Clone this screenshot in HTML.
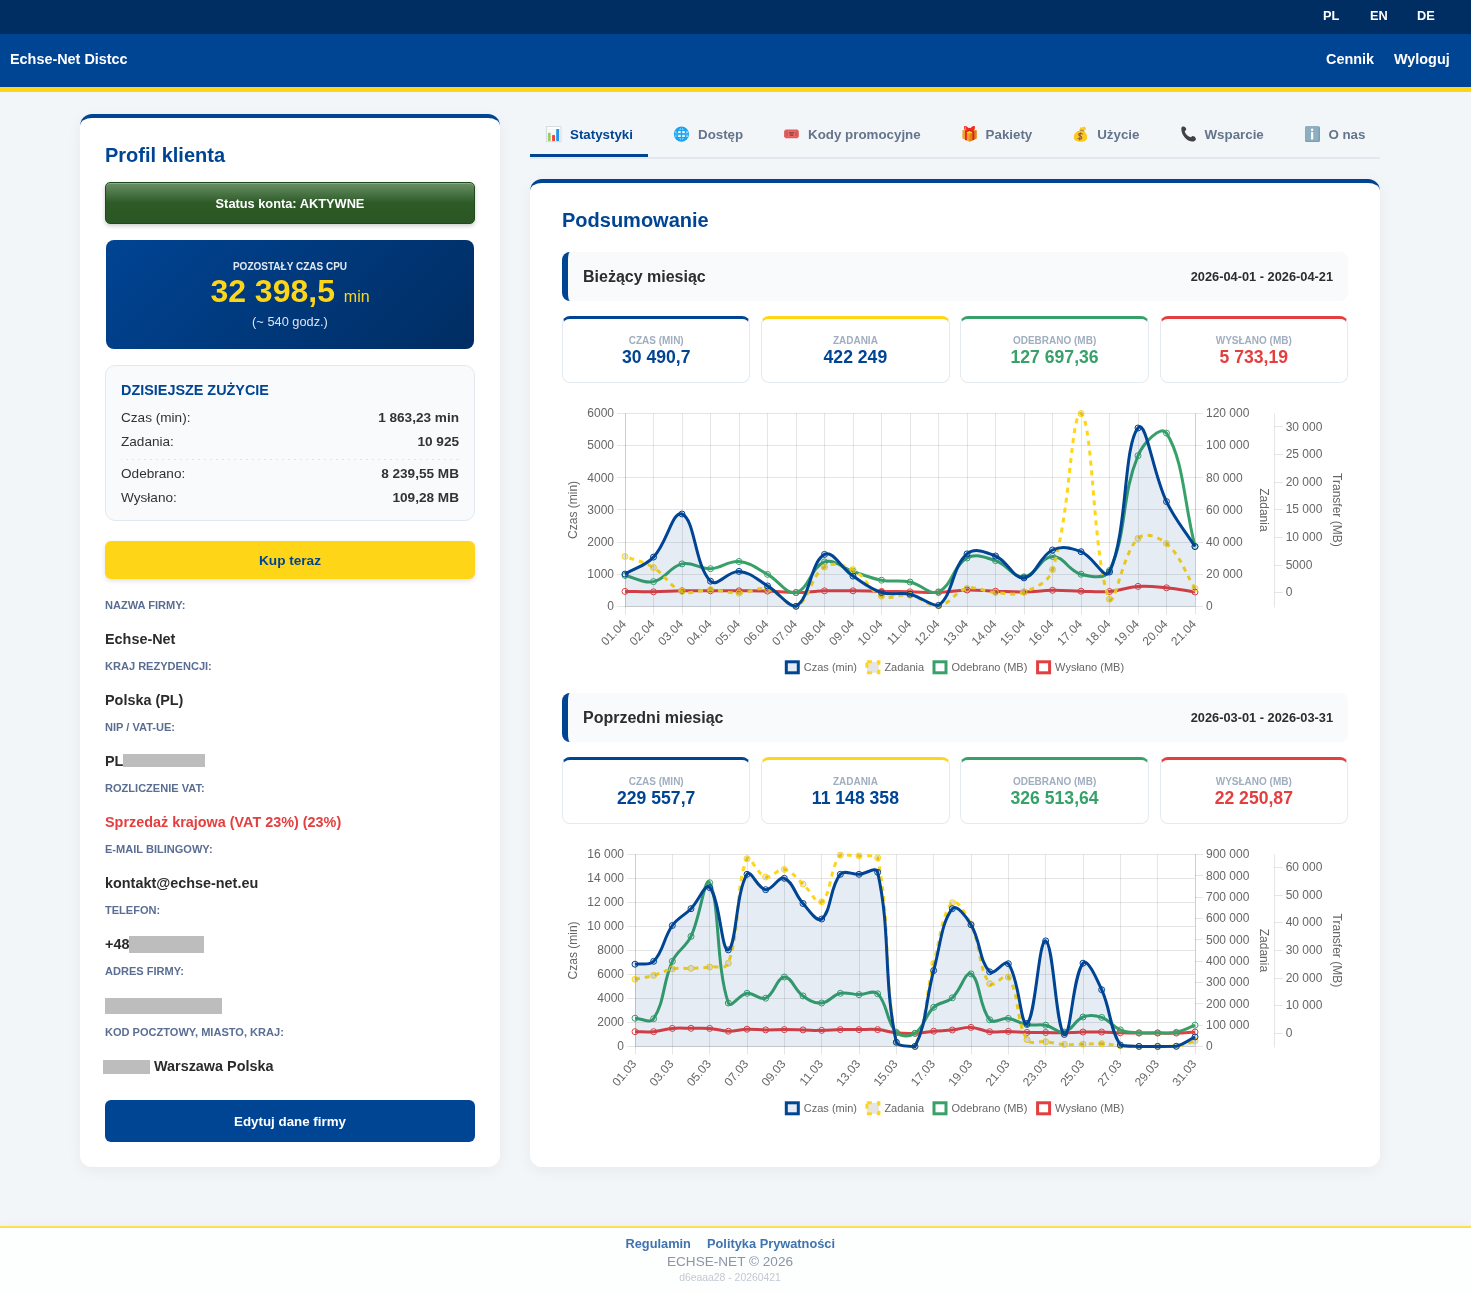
<!DOCTYPE html>
<html lang="pl"><head><meta charset="utf-8"><title>Echse-Net Distcc</title>
<style>
*{box-sizing:border-box;margin:0;padding:0}
html,body{width:1471px;height:1292px;overflow:hidden}
body{font-family:"Liberation Sans",sans-serif;background:#f3f6f9;color:#333;position:relative;font-size:16px}
.abs{position:absolute}
.abs,.chart{will-change:transform}
.topbar{left:0;top:0;width:1471px;height:34px;background:#002d62}
.topbar a{position:absolute;top:0;height:34px;line-height:32px;font-size:12.8px;font-weight:bold;color:#fff}
.nav{left:0;top:34px;width:1471px;height:58px;background:#004494;border-bottom:5px solid #FFD617}
.nav span{position:absolute;top:0;height:53px;line-height:50px;font-size:14.4px;font-weight:bold;color:#fff;white-space:nowrap}
.card{background:#fff;border-top:4px solid #004494;border-radius:12px;box-shadow:0 4px 15px rgba(0,0,0,0.05)}
#left{left:80px;top:114px;width:420px;height:1053px}
#right{left:530px;top:179px;width:850px;height:988px}
h2{position:absolute;font-weight:bold;color:#004494;white-space:nowrap}
.status{left:25px;top:64px;width:370px;height:42px;border:1px solid #1f4a1b;border-radius:5px;background:linear-gradient(to bottom,#6a9066 0%,#2d5a27 50%,#2b5625 100%);box-shadow:inset 0 1px 0 rgba(255,255,255,0.25),0 2px 4px rgba(0,0,0,0.2);color:#fff;font-weight:bold;font-size:12.8px;text-align:center;line-height:40px;padding-top:1px}
.cpu{left:26px;top:122px;width:368px;height:109px;border-radius:8px;background:linear-gradient(135deg,#004494 0%,#002d62 100%);text-align:center;color:#fff}
.cpu .l{position:absolute;left:0;width:100%;top:21px;font-size:10px;font-weight:bold;line-height:12px;color:#e2e8f0}
.cpu .v{position:absolute;left:0;width:100%;top:32px;font-size:32px;font-weight:bold;line-height:38px;color:#FFD617;white-space:nowrap}
.cpu .v span{font-size:16px;font-weight:normal}
.cpu .h{position:absolute;left:0;width:100%;top:74px;font-size:12.8px;line-height:16px;color:#dbe3f0}
.today{left:25px;top:247px;width:370px;height:156px;border:1px solid #e2e8f0;border-radius:10px;background:#f8fafc}
.today .t{position:absolute;left:15px;top:15px;font-size:14.4px;font-weight:bold;color:#004494;line-height:18px}
.today .r{position:absolute;left:15px;right:15px;height:18px;line-height:18px;font-size:13.6px;color:#333}
.today .r b{position:absolute;right:0;top:0}
.today .sep{position:absolute;left:15px;right:15px;top:93px;height:1px;background:repeating-linear-gradient(to right,#dde5ef 0,#dde5ef 2px,transparent 2px,transparent 6px);background-position:-1px 0}
.btn{height:38px;border-radius:6px;text-align:center;font-weight:bold;font-size:13.6px}
.buy{left:25px;top:423px;width:370px;background:#FFD617;color:#004494;line-height:40px;box-shadow:0 2px 5px rgba(0,0,0,0.12)}
.edit{left:25px;top:982px;width:370px;height:42px;background:#004494;color:#fff;line-height:44px;font-size:13.333px}
.fl{position:absolute;left:25px;font-size:11.05px;font-weight:bold;color:#5a6e94;line-height:14px;white-space:nowrap}
.fv{position:absolute;left:25px;font-size:14.4px;font-weight:bold;color:#2b2b2b;line-height:18px;white-space:nowrap}
.red{color:#e53e3e}
.gray{position:absolute;background:#bdbdbd}
.tabs{left:530px;top:110px;width:850px;height:49px;border-bottom:2px solid #e2e8f0}
.tab{position:absolute;top:1px;height:49px;line-height:48px;font-size:13.333px;font-weight:bold;color:#64748b;white-space:nowrap}
.tab.on{color:#004494}
.tab svg{position:absolute;top:16px}
.tabline{left:530px;top:154px;width:118px;height:3px;background:#004494}
.mh{left:32px;width:786px;height:49px;background:#f8fafc;border-left:6px solid #004494;border-radius:8px}
.mh b{position:absolute;left:15px;top:0;line-height:49px;font-size:16px;color:#2d2d2d}
.mh i{position:absolute;right:15px;top:0;line-height:49px;font-size:12.8px;font-style:normal;font-weight:bold;color:#2d2d2d}
.st{position:absolute;width:188.4px;height:67px;background:#fff;border:1px solid #e4eaf2;border-top:3px solid #004494;border-radius:8px;text-align:center}
.st .a{position:absolute;left:0;width:100%;top:16px;font-size:10px;font-weight:bold;line-height:12px;color:#a0aec0}
.st .b{position:absolute;left:0;width:100%;top:27px;font-size:17.6px;line-height:22px;font-weight:bold;color:#004494}
.chart{position:absolute;overflow:visible}
.footer{left:0;top:1226px;width:1471px;height:66px;background:#fdfefe;border-top:2px solid #ffdf52;text-align:center;box-shadow:0 -2px 8px rgba(0,0,0,0.03)}
.footer .a{position:absolute;top:8px;font-size:12.8px;font-weight:bold;color:#4073af;line-height:16px;white-space:nowrap}
.footer .b{position:absolute;left:0;width:1460px;top:26px;font-size:13.6px;color:#8a95a8;line-height:16px}
.footer .c{position:absolute;left:0;width:1460px;top:44px;font-size:10.4px;color:#c3c8d2;line-height:12px}
</style></head>
<body>
<div class="abs topbar"><a style="left:1323px">PL</a><a style="left:1370px">EN</a><a style="left:1417px">DE</a></div>
<div class="abs nav"><span style="left:10px">Echse-Net Distcc</span><span style="left:1326px">Cennik</span><span style="left:1394px">Wyloguj</span></div>

<div class="abs card" id="left">
 <h2 style="left:25px;top:25px;font-size:20px;line-height:24px">Profil klienta</h2>
 <div class="abs status">Status konta: AKTYWNE</div>
 <div class="abs cpu"><div class="l">POZOSTAŁY CZAS CPU</div><div class="v">32 398,5 <span>min</span></div><div class="h">(~ 540 godz.)</div></div>
 <div class="abs today">
  <div class="t">DZISIEJSZE ZUŻYCIE</div>
  <div class="r" style="top:43px">Czas (min):<b>1 863,23 min</b></div>
  <div class="r" style="top:67px">Zadania:<b>10 925</b></div>
  <div class="sep"></div>
  <div class="r" style="top:99px">Odebrano:<b>8 239,55 MB</b></div>
  <div class="r" style="top:123px">Wysłano:<b>109,28 MB</b></div>
 </div>
 <div class="abs btn buy">Kup teraz</div>
 <div class="fl" style="top:480px">NAZWA FIRMY:</div><div class="fv" style="top:512px">Echse-Net</div>
 <div class="fl" style="top:541px">KRAJ REZYDENCJI:</div><div class="fv" style="top:573px">Polska (PL)</div>
 <div class="fl" style="top:602px">NIP / VAT-UE:</div><div class="fv" style="top:634px">PL</div>
 <div class="gray" style="left:43px;top:636px;width:82px;height:13px"></div>
 <div class="fl" style="top:663px">ROZLICZENIE VAT:</div><div class="fv red" style="top:695px">Sprzedaż krajowa (VAT 23%) (23%)</div>
 <div class="fl" style="top:724px">E-MAIL BILINGOWY:</div><div class="fv" style="top:756px">kontakt@echse-net.eu</div>
 <div class="fl" style="top:785px">TELEFON:</div><div class="fv" style="top:817px">+48</div>
 <div class="gray" style="left:49px;top:818px;width:75px;height:17px"></div>
 <div class="fl" style="top:846px">ADRES FIRMY:</div>
 <div class="gray" style="left:25px;top:880px;width:117px;height:16px"></div>
 <div class="fl" style="top:907px">KOD POCZTOWY, MIASTO, KRAJ:</div><div class="fv" style="top:939px;left:74px">Warszawa Polska</div>
 <div class="gray" style="left:23px;top:942px;width:47px;height:14px"></div>
 <div class="abs btn edit">Edytuj dane firmy</div>
</div>

<div class="abs tabs">
 <div class="tab on" style="left:40.0px">Statystyki</div>
 <div class="tab" style="left:168.0px">Dostęp</div>
 <div class="tab" style="left:278.1px">Kody promocyjne</div>
 <div class="tab" style="left:455.6px">Pakiety</div>
 <div class="tab" style="left:567.2px">Użycie</div>
 <div class="tab" style="left:674.5px">Wsparcie</div>
 <div class="tab" style="left:798.4px">O nas</div>
</div>
<div class="abs tabline"></div>
<svg class="chart" style="left:540px;top:120px" width="800" height="28" viewBox="540 120 800 28">
<!-- bar chart -->
<g>
<rect x="546.4" y="126.6" width="14.5" height="15.1" fill="#fff" stroke="#cfd8dc" stroke-width="0.9"/>
<path d="M547,129.6H560.4M547,131.9H560.4M547,134.2H560.4M547,136.5H560.4M547,138.8H560.4" stroke="#e6ebef" stroke-width="0.7" fill="none"/>
<rect x="547.9" y="132.8" width="2.8" height="8.2" rx="0.6" fill="#9ccc65"/>
<rect x="552.1" y="134.9" width="2.9" height="6.1" rx="0.6" fill="#f44336"/>
<rect x="556.2" y="129" width="2.9" height="12" rx="0.6" fill="#1e96ec"/>
</g>
<!-- globe -->
<g transform="translate(681.45,134.05)">
<circle r="7.6" fill="#16a5f3"/>
<g fill="#e9f6fe">
<rect x="-3.4" y="-2.95" width="2.7" height="1.9" rx="0.3"/><rect x="0.7" y="-2.95" width="2.7" height="1.9" rx="0.3"/>
<rect x="-3.4" y="1.05" width="2.7" height="1.9" rx="0.3"/><rect x="0.7" y="1.05" width="2.7" height="1.9" rx="0.3"/>
<path d="M-2.4,-4.3 L-0.7,-6 L-0.7,-4.3Z" opacity="0.85"/><path d="M2.4,-4.3 L0.7,-6 L0.7,-4.3Z" opacity="0.85"/>
<path d="M-2.4,4.3 L-0.7,6 L-0.7,4.3Z" opacity="0.75"/><path d="M2.4,4.3 L0.7,6 L0.7,4.3Z" opacity="0.75"/>
</g>
<g fill="#9bd9fb"><rect x="-6.3" y="-2.8" width="1.5" height="1.7" rx="0.4"/><rect x="4.6" y="-2.9" width="1.9" height="1.8" rx="0.4"/><rect x="-6.3" y="1.1" width="1.5" height="1.7" rx="0.4"/><rect x="4.6" y="1.1" width="1.9" height="1.8" rx="0.4"/></g>
<rect x="-6.6" y="-0.75" width="13.6" height="1.5" fill="#4dbaf7" opacity="0.8"/>
<rect x="-0.45" y="-6.8" width="0.9" height="13.6" fill="#16a5f3"/>
</g>
<!-- ticket -->
<g>
<path d="M785.6,129.5 H797.3 L798.8,131 V136.7 L797.3,138.3 H785.6 L784.1,136.7 V131 Z" fill="#e1585a"/>
<rect x="785.3" y="130.6" width="12.3" height="6.6" fill="#ec6762"/>
<rect x="785.7" y="131.5" width="2.3" height="4.8" fill="#c85e58"/><rect x="795" y="131.5" width="2.3" height="4.8" fill="#c85e58"/>
<path d="M789.1,132.1 H793.9 V133.2 L793,134 V134.6 L793.5,135 V135.9 H789.6 V135 L790.1,134.6 V134 L789.1,133.2Z" fill="#9a4a46"/>
<rect x="790.1" y="133.3" width="2.9" height="1.2" fill="#b85650"/>
</g>
<!-- gift -->
<g>
<path d="M962.4,130.3 L969.5,128.9 L976.6,130.3 V138.6 L969.5,141.7 L962.4,138.6Z" fill="#eea22c"/>
<path d="M969.5,132.6 L976.6,130.3 V138.6 L969.5,141.7Z" fill="#df8417"/>
<path d="M966.9,131.4 L969.5,130.9 L972.1,131.4 L972,132.9 L969.5,133.4 L967,132.9Z" fill="#fdd916"/>
<rect x="965" y="130.6" width="1.9" height="9.6" fill="#ef2222"/>
<path d="M972.4,131 H974.3 V139.6 L972.4,140.4Z" fill="#dc1e26"/>
<path d="M969.6,130 C968,126.600 965.500,125.400 964.200,126.300 C963.500,128.300 964.500,130.800 966.500,131.300 C968,131.400 969.200,130.900 969.600,130Z" fill="#f72a1e"/>
<path d="M969.400,130 C971,126.600 973.500,125.400 974.800,126.300 C975.500,128.300 974.500,130.800 972.500,131.300 C971,131.400 969.800,130.900 969.400,130Z" fill="#f72a1e"/>
<ellipse cx="969.5" cy="129.4" rx="1.9" ry="1.7" fill="#ee2a22"/>
<path d="M966,131.100 C967.500,131.500 969,131.200 969.500,130.300 C970,131.200 971.500,131.500 973,131.100" stroke="#c2161c" stroke-width="0.9" fill="none"/>
<path d="M965.300,127.200 L965.900,129.800" stroke="#ffb3b3" stroke-width="0.7" fill="none" stroke-linecap="round"/>
</g>
<!-- money bag -->
<g>
<path d="M1080,130.600 C1076.500,131 1073.800,133.900 1073.800,137.300 C1073.800,140.200 1076,141.700 1080.400,141.700 C1084.900,141.700 1087.100,140.200 1087.100,137.400 C1087.100,134.300 1085.400,131.700 1083.300,130.700Z" fill="#fdc91f"/>
<path d="M1080.200,130.400 L1080,127.300 L1081.600,127.700 L1082.500,126.700 L1083.600,127.300 L1084.800,126.200 L1085.400,127.700 L1086.300,129.300 L1083.700,130.800Z" fill="#fccb22"/>
<path d="M1080,130.100 L1083.800,130.900" stroke="#a9782f" stroke-width="1" fill="none" stroke-linecap="round"/>
<path d="M1082.200,134.100 C1081.600,133.100 1079.600,132.900 1078.900,133.900 C1078.200,135 1079.300,135.700 1080.300,136.100 C1081.400,136.500 1082.200,137.300 1081.500,138.400 C1080.800,139.400 1078.800,139.300 1078,138.200 M1080.400,132.700 L1079.600,139.900" stroke="#8a5a3c" stroke-width="1.05" fill="none" stroke-linecap="round"/>
</g>
<!-- phone -->
<g>
<path d="M1181.300,128.400 C1181.300,126.800 1182.800,126.300 1183.900,126.500 C1185.300,126.800 1186.400,128.300 1186.200,129.600 C1186.100,130.400 1185.100,130.900 1184.700,131.500 C1185.500,134.300 1188.200,136.800 1190.900,137.300 C1191.400,136.800 1191.900,135.900 1192.700,135.900 C1194.100,135.900 1195.700,137.200 1195.900,138.600 C1196.100,139.900 1195.100,141.200 1193.600,141.500 C1187.500,142.300 1181.200,135.500 1181.300,128.400Z" fill="#424242"/>
</g>
<!-- info -->
<g>
<rect x="1305" y="126.200" width="15" height="15.800" rx="1.500" fill="#7a9fb3"/>
<rect x="1305.300" y="126.300" width="13.200" height="14.400" rx="1.200" fill="#8dafc2"/>
<circle cx="1312.100" cy="129.700" r="1.250" fill="#fff"/>
<rect x="1311" y="132" width="2.200" height="7.600" rx="0.300" fill="#fbfcfd"/>
</g>
</svg>


<div class="abs card" id="right">
 <h2 style="left:32px;top:24px;font-size:20px;line-height:26px">Podsumowanie</h2>
 <div class="abs mh" style="top:69px"><b>Bieżący miesiąc</b><i>2026-04-01 - 2026-04-21</i></div>
 <div class="st" style="left:32px;top:133px"><div class="a">CZAS (MIN)</div><div class="b">30 490,7</div></div>
 <div class="st" style="left:231.2px;top:133px;border-top-color:#FFD617"><div class="a">ZADANIA</div><div class="b">422 249</div></div>
 <div class="st" style="left:430.4px;top:133px;border-top-color:#38a169"><div class="a">ODEBRANO (MB)</div><div class="b" style="color:#38a169">127 697,36</div></div>
 <div class="st" style="left:629.6px;top:133px;border-top-color:#e53e3e"><div class="a">WYSŁANO (MB)</div><div class="b" style="color:#e53e3e">5 733,19</div></div>
 <div class="abs mh" style="top:510px"><b>Poprzedni miesiąc</b><i>2026-03-01 - 2026-03-31</i></div>
 <div class="st" style="left:32px;top:574px"><div class="a">CZAS (MIN)</div><div class="b">229 557,7</div></div>
 <div class="st" style="left:231.2px;top:574px;border-top-color:#FFD617"><div class="a">ZADANIA</div><div class="b">11 148 358</div></div>
 <div class="st" style="left:430.4px;top:574px;border-top-color:#38a169"><div class="a">ODEBRANO (MB)</div><div class="b" style="color:#38a169">326 513,64</div></div>
 <div class="st" style="left:629.6px;top:574px;border-top-color:#e53e3e"><div class="a">WYSŁANO (MB)</div><div class="b" style="color:#e53e3e">22 250,87</div></div>
</div>
<svg class="chart" style="left:562px;top:400px" width="786" height="290" viewBox="562 400 786 290"><line x1="625.5" y1="413.4" x2="625.5" y2="614.4" stroke="rgba(0,0,0,0.1)" stroke-width="1"/>
<line x1="653.5" y1="413.4" x2="653.5" y2="614.4" stroke="rgba(0,0,0,0.1)" stroke-width="1"/>
<line x1="682.5" y1="413.4" x2="682.5" y2="614.4" stroke="rgba(0,0,0,0.1)" stroke-width="1"/>
<line x1="710.5" y1="413.4" x2="710.5" y2="614.4" stroke="rgba(0,0,0,0.1)" stroke-width="1"/>
<line x1="739.5" y1="413.4" x2="739.5" y2="614.4" stroke="rgba(0,0,0,0.1)" stroke-width="1"/>
<line x1="767.5" y1="413.4" x2="767.5" y2="614.4" stroke="rgba(0,0,0,0.1)" stroke-width="1"/>
<line x1="796.5" y1="413.4" x2="796.5" y2="614.4" stroke="rgba(0,0,0,0.1)" stroke-width="1"/>
<line x1="824.5" y1="413.4" x2="824.5" y2="614.4" stroke="rgba(0,0,0,0.1)" stroke-width="1"/>
<line x1="853.5" y1="413.4" x2="853.5" y2="614.4" stroke="rgba(0,0,0,0.1)" stroke-width="1"/>
<line x1="881.5" y1="413.4" x2="881.5" y2="614.4" stroke="rgba(0,0,0,0.1)" stroke-width="1"/>
<line x1="910.5" y1="413.4" x2="910.5" y2="614.4" stroke="rgba(0,0,0,0.1)" stroke-width="1"/>
<line x1="938.5" y1="413.4" x2="938.5" y2="614.4" stroke="rgba(0,0,0,0.1)" stroke-width="1"/>
<line x1="967.5" y1="413.4" x2="967.5" y2="614.4" stroke="rgba(0,0,0,0.1)" stroke-width="1"/>
<line x1="995.5" y1="413.4" x2="995.5" y2="614.4" stroke="rgba(0,0,0,0.1)" stroke-width="1"/>
<line x1="1024.5" y1="413.4" x2="1024.5" y2="614.4" stroke="rgba(0,0,0,0.1)" stroke-width="1"/>
<line x1="1052.5" y1="413.4" x2="1052.5" y2="614.4" stroke="rgba(0,0,0,0.1)" stroke-width="1"/>
<line x1="1081.5" y1="413.4" x2="1081.5" y2="614.4" stroke="rgba(0,0,0,0.1)" stroke-width="1"/>
<line x1="1109.5" y1="413.4" x2="1109.5" y2="614.4" stroke="rgba(0,0,0,0.1)" stroke-width="1"/>
<line x1="1138.5" y1="413.4" x2="1138.5" y2="614.4" stroke="rgba(0,0,0,0.1)" stroke-width="1"/>
<line x1="1166.5" y1="413.4" x2="1166.5" y2="614.4" stroke="rgba(0,0,0,0.1)" stroke-width="1"/>
<line x1="1195.5" y1="413.4" x2="1195.5" y2="614.4" stroke="rgba(0,0,0,0.1)" stroke-width="1"/>
<line x1="617.0" y1="606.5" x2="1195.0" y2="606.5" stroke="rgba(0,0,0,0.1)" stroke-width="1"/>
<line x1="617.0" y1="574.5" x2="1195.0" y2="574.5" stroke="rgba(0,0,0,0.1)" stroke-width="1"/>
<line x1="617.0" y1="542.5" x2="1195.0" y2="542.5" stroke="rgba(0,0,0,0.1)" stroke-width="1"/>
<line x1="617.0" y1="509.5" x2="1195.0" y2="509.5" stroke="rgba(0,0,0,0.1)" stroke-width="1"/>
<line x1="617.0" y1="477.5" x2="1195.0" y2="477.5" stroke="rgba(0,0,0,0.1)" stroke-width="1"/>
<line x1="617.0" y1="445.5" x2="1195.0" y2="445.5" stroke="rgba(0,0,0,0.1)" stroke-width="1"/>
<line x1="617.0" y1="413.5" x2="1195.0" y2="413.5" stroke="rgba(0,0,0,0.1)" stroke-width="1"/>
<line x1="1195.0" y1="606.5" x2="1203.0" y2="606.5" stroke="rgba(0,0,0,0.1)" stroke-width="1"/>
<line x1="1195.0" y1="574.5" x2="1203.0" y2="574.5" stroke="rgba(0,0,0,0.1)" stroke-width="1"/>
<line x1="1195.0" y1="542.5" x2="1203.0" y2="542.5" stroke="rgba(0,0,0,0.1)" stroke-width="1"/>
<line x1="1195.0" y1="509.5" x2="1203.0" y2="509.5" stroke="rgba(0,0,0,0.1)" stroke-width="1"/>
<line x1="1195.0" y1="477.5" x2="1203.0" y2="477.5" stroke="rgba(0,0,0,0.1)" stroke-width="1"/>
<line x1="1195.0" y1="445.5" x2="1203.0" y2="445.5" stroke="rgba(0,0,0,0.1)" stroke-width="1"/>
<line x1="1195.0" y1="413.5" x2="1203.0" y2="413.5" stroke="rgba(0,0,0,0.1)" stroke-width="1"/>
<line x1="625.5" y1="413.4" x2="625.5" y2="606.4" stroke="rgba(0,0,0,0.1)" stroke-width="1"/>
<line x1="1195.5" y1="413.4" x2="1195.5" y2="606.4" stroke="rgba(0,0,0,0.1)" stroke-width="1"/>
<line x1="625.0" y1="606.5" x2="1195.0" y2="606.5" stroke="rgba(0,0,0,0.1)" stroke-width="1"/>
<line x1="1274.5" y1="413.4" x2="1274.5" y2="607.4" stroke="rgba(0,0,0,0.1)" stroke-width="1"/>
<line x1="1274.7" y1="592.5" x2="1282.7" y2="592.5" stroke="rgba(0,0,0,0.1)" stroke-width="1"/>
<line x1="1274.7" y1="565.5" x2="1282.7" y2="565.5" stroke="rgba(0,0,0,0.1)" stroke-width="1"/>
<line x1="1274.7" y1="537.5" x2="1282.7" y2="537.5" stroke="rgba(0,0,0,0.1)" stroke-width="1"/>
<line x1="1274.7" y1="509.5" x2="1282.7" y2="509.5" stroke="rgba(0,0,0,0.1)" stroke-width="1"/>
<line x1="1274.7" y1="482.5" x2="1282.7" y2="482.5" stroke="rgba(0,0,0,0.1)" stroke-width="1"/>
<line x1="1274.7" y1="454.5" x2="1282.7" y2="454.5" stroke="rgba(0,0,0,0.1)" stroke-width="1"/>
<line x1="1274.7" y1="426.5" x2="1282.7" y2="426.5" stroke="rgba(0,0,0,0.1)" stroke-width="1"/>
<path d="M625.00,591.40 C636.40,591.56 642.10,591.92 653.50,591.80 C664.90,591.68 670.60,591.00 682.00,590.80 C693.40,590.60 699.10,590.80 710.50,590.80 C721.90,590.80 727.60,590.74 739.00,590.80 C750.40,590.86 756.11,590.74 767.50,591.10 C778.91,591.46 784.60,592.66 796.00,592.60 C807.40,592.54 813.09,591.16 824.50,590.80 C835.89,590.44 841.60,590.68 853.00,590.80 C864.40,590.92 870.10,591.20 881.50,591.40 C892.90,591.60 898.60,591.58 910.00,591.80 C921.40,592.02 927.12,592.86 938.50,592.50 C949.92,592.14 955.58,590.26 967.00,590.00 C978.38,589.74 984.10,590.80 995.50,591.20 C1006.90,591.60 1012.61,592.18 1024.00,592.00 C1035.41,591.82 1041.09,590.46 1052.50,590.30 C1063.89,590.14 1069.60,590.96 1081.00,591.20 C1092.40,591.44 1098.19,592.45 1109.50,591.50 C1120.99,590.53 1126.52,587.15 1138.00,586.40 C1149.32,585.67 1155.15,586.69 1166.50,587.80 C1177.95,588.93 1183.60,590.32 1195.00,592.00" fill="none" stroke="#e53e3e" stroke-width="3" stroke-linejoin="miter"/>
<circle cx="625.00" cy="591.40" r="3" fill="none" stroke="#e53e3e" stroke-width="1"/><circle cx="653.50" cy="591.80" r="3" fill="none" stroke="#e53e3e" stroke-width="1"/><circle cx="682.00" cy="590.80" r="3" fill="none" stroke="#e53e3e" stroke-width="1"/><circle cx="710.50" cy="590.80" r="3" fill="none" stroke="#e53e3e" stroke-width="1"/><circle cx="739.00" cy="590.80" r="3" fill="none" stroke="#e53e3e" stroke-width="1"/><circle cx="767.50" cy="591.10" r="3" fill="none" stroke="#e53e3e" stroke-width="1"/><circle cx="796.00" cy="592.60" r="3" fill="none" stroke="#e53e3e" stroke-width="1"/><circle cx="824.50" cy="590.80" r="3" fill="none" stroke="#e53e3e" stroke-width="1"/><circle cx="853.00" cy="590.80" r="3" fill="none" stroke="#e53e3e" stroke-width="1"/><circle cx="881.50" cy="591.40" r="3" fill="none" stroke="#e53e3e" stroke-width="1"/><circle cx="910.00" cy="591.80" r="3" fill="none" stroke="#e53e3e" stroke-width="1"/><circle cx="938.50" cy="592.50" r="3" fill="none" stroke="#e53e3e" stroke-width="1"/><circle cx="967.00" cy="590.00" r="3" fill="none" stroke="#e53e3e" stroke-width="1"/><circle cx="995.50" cy="591.20" r="3" fill="none" stroke="#e53e3e" stroke-width="1"/><circle cx="1024.00" cy="592.00" r="3" fill="none" stroke="#e53e3e" stroke-width="1"/><circle cx="1052.50" cy="590.30" r="3" fill="none" stroke="#e53e3e" stroke-width="1"/><circle cx="1081.00" cy="591.20" r="3" fill="none" stroke="#e53e3e" stroke-width="1"/><circle cx="1109.50" cy="591.50" r="3" fill="none" stroke="#e53e3e" stroke-width="1"/><circle cx="1138.00" cy="586.40" r="3" fill="none" stroke="#e53e3e" stroke-width="1"/><circle cx="1166.50" cy="587.80" r="3" fill="none" stroke="#e53e3e" stroke-width="1"/><circle cx="1195.00" cy="592.00" r="3" fill="none" stroke="#e53e3e" stroke-width="1"/>
<path d="M625.00,575.50 C636.40,577.94 642.90,583.76 653.50,581.60 C665.70,579.12 669.75,566.67 682.00,563.90 C692.55,561.51 699.20,569.18 710.50,568.70 C722.00,568.22 727.95,560.40 739.00,561.50 C750.75,562.68 756.53,568.44 767.50,574.40 C779.33,580.84 785.81,594.73 796.00,592.50 C808.61,589.73 811.23,566.81 824.50,561.90 C834.03,558.37 841.56,567.73 853.00,571.40 C864.36,575.05 869.85,578.03 881.50,580.20 C892.65,582.27 898.91,579.74 910.00,582.00 C921.71,584.38 929.26,595.69 938.50,591.80 C952.06,586.09 953.16,565.58 967.00,558.00 C975.96,553.10 984.87,557.09 995.50,560.60 C1007.67,564.61 1012.98,577.61 1024.00,576.80 C1035.78,575.93 1040.86,556.93 1052.50,556.40 C1063.66,555.89 1068.71,571.16 1081.00,574.20 C1091.51,576.80 1105.04,579.77 1109.50,570.50 C1127.84,532.37 1120.56,497.73 1138.00,455.70 C1143.36,442.77 1161.09,424.48 1166.50,433.10 C1183.89,460.80 1183.60,501.14 1195.00,546.50" fill="none" stroke="#38a169" stroke-width="3" stroke-linejoin="miter"/>
<circle cx="625.00" cy="575.50" r="3" fill="none" stroke="#38a169" stroke-width="1"/><circle cx="653.50" cy="581.60" r="3" fill="none" stroke="#38a169" stroke-width="1"/><circle cx="682.00" cy="563.90" r="3" fill="none" stroke="#38a169" stroke-width="1"/><circle cx="710.50" cy="568.70" r="3" fill="none" stroke="#38a169" stroke-width="1"/><circle cx="739.00" cy="561.50" r="3" fill="none" stroke="#38a169" stroke-width="1"/><circle cx="767.50" cy="574.40" r="3" fill="none" stroke="#38a169" stroke-width="1"/><circle cx="796.00" cy="592.50" r="3" fill="none" stroke="#38a169" stroke-width="1"/><circle cx="824.50" cy="561.90" r="3" fill="none" stroke="#38a169" stroke-width="1"/><circle cx="853.00" cy="571.40" r="3" fill="none" stroke="#38a169" stroke-width="1"/><circle cx="881.50" cy="580.20" r="3" fill="none" stroke="#38a169" stroke-width="1"/><circle cx="910.00" cy="582.00" r="3" fill="none" stroke="#38a169" stroke-width="1"/><circle cx="938.50" cy="591.80" r="3" fill="none" stroke="#38a169" stroke-width="1"/><circle cx="967.00" cy="558.00" r="3" fill="none" stroke="#38a169" stroke-width="1"/><circle cx="995.50" cy="560.60" r="3" fill="none" stroke="#38a169" stroke-width="1"/><circle cx="1024.00" cy="576.80" r="3" fill="none" stroke="#38a169" stroke-width="1"/><circle cx="1052.50" cy="556.40" r="3" fill="none" stroke="#38a169" stroke-width="1"/><circle cx="1081.00" cy="574.20" r="3" fill="none" stroke="#38a169" stroke-width="1"/><circle cx="1109.50" cy="570.50" r="3" fill="none" stroke="#38a169" stroke-width="1"/><circle cx="1138.00" cy="455.70" r="3" fill="none" stroke="#38a169" stroke-width="1"/><circle cx="1166.50" cy="433.10" r="3" fill="none" stroke="#38a169" stroke-width="1"/><circle cx="1195.00" cy="546.50" r="3" fill="none" stroke="#38a169" stroke-width="1"/>
<path d="M625.00,556.40 C636.40,560.88 643.20,561.27 653.50,567.60 C666.00,575.27 669.11,586.40 682.00,591.40 C691.91,595.24 699.13,589.36 710.50,589.70 C721.93,590.04 727.62,593.22 739.00,593.10 C750.42,592.98 756.93,586.65 767.50,589.10 C779.73,591.93 786.73,606.40 796.00,606.30 C809.53,601.06 810.16,576.24 824.50,567.00 C832.96,561.56 843.34,564.67 853.00,569.60 C866.14,576.31 868.34,590.19 881.50,596.10 C891.14,600.43 898.97,593.32 910.00,595.20 C921.77,597.20 927.63,606.40 938.50,605.80 C950.43,604.38 954.76,591.23 967.00,588.40 C977.56,585.95 984.04,591.88 995.50,592.60 C1006.84,593.32 1013.96,596.05 1024.00,592.00 C1036.76,586.85 1048.26,582.88 1052.50,569.60 C1071.06,511.52 1070.56,413.40 1081.00,413.60 C1093.36,420.02 1092.70,562.39 1109.50,599.20 C1115.50,606.40 1122.08,554.03 1138.00,538.50 C1144.88,531.79 1158.45,536.56 1166.50,543.60 C1181.25,556.48 1183.60,570.42 1195.00,588.30" fill="none" stroke="#FFD617" stroke-width="3" stroke-linejoin="miter" stroke-dasharray="5 5" stroke-dashoffset="-4.5"/>
<circle cx="625.00" cy="556.40" r="3" fill="rgba(0,0,0,0.1)" stroke="#FFD617" stroke-width="1"/><circle cx="653.50" cy="567.60" r="3" fill="rgba(0,0,0,0.1)" stroke="#FFD617" stroke-width="1"/><circle cx="682.00" cy="591.40" r="3" fill="rgba(0,0,0,0.1)" stroke="#FFD617" stroke-width="1"/><circle cx="710.50" cy="589.70" r="3" fill="rgba(0,0,0,0.1)" stroke="#FFD617" stroke-width="1"/><circle cx="739.00" cy="593.10" r="3" fill="rgba(0,0,0,0.1)" stroke="#FFD617" stroke-width="1"/><circle cx="767.50" cy="589.10" r="3" fill="rgba(0,0,0,0.1)" stroke="#FFD617" stroke-width="1"/><circle cx="796.00" cy="606.30" r="3" fill="rgba(0,0,0,0.1)" stroke="#FFD617" stroke-width="1"/><circle cx="824.50" cy="567.00" r="3" fill="rgba(0,0,0,0.1)" stroke="#FFD617" stroke-width="1"/><circle cx="853.00" cy="569.60" r="3" fill="rgba(0,0,0,0.1)" stroke="#FFD617" stroke-width="1"/><circle cx="881.50" cy="596.10" r="3" fill="rgba(0,0,0,0.1)" stroke="#FFD617" stroke-width="1"/><circle cx="910.00" cy="595.20" r="3" fill="rgba(0,0,0,0.1)" stroke="#FFD617" stroke-width="1"/><circle cx="938.50" cy="605.80" r="3" fill="rgba(0,0,0,0.1)" stroke="#FFD617" stroke-width="1"/><circle cx="967.00" cy="588.40" r="3" fill="rgba(0,0,0,0.1)" stroke="#FFD617" stroke-width="1"/><circle cx="995.50" cy="592.60" r="3" fill="rgba(0,0,0,0.1)" stroke="#FFD617" stroke-width="1"/><circle cx="1024.00" cy="592.00" r="3" fill="rgba(0,0,0,0.1)" stroke="#FFD617" stroke-width="1"/><circle cx="1052.50" cy="569.60" r="3" fill="rgba(0,0,0,0.1)" stroke="#FFD617" stroke-width="1"/><circle cx="1081.00" cy="413.60" r="3" fill="rgba(0,0,0,0.1)" stroke="#FFD617" stroke-width="1"/><circle cx="1109.50" cy="599.20" r="3" fill="rgba(0,0,0,0.1)" stroke="#FFD617" stroke-width="1"/><circle cx="1138.00" cy="538.50" r="3" fill="rgba(0,0,0,0.1)" stroke="#FFD617" stroke-width="1"/><circle cx="1166.50" cy="543.60" r="3" fill="rgba(0,0,0,0.1)" stroke="#FFD617" stroke-width="1"/><circle cx="1195.00" cy="588.30" r="3" fill="rgba(0,0,0,0.1)" stroke="#FFD617" stroke-width="1"/>
<path d="M625.00,574.10 C636.40,567.30 644.58,566.50 653.50,557.10 C667.38,542.46 672.55,510.00 682.00,514.00 C695.35,519.64 694.36,564.95 710.50,581.20 C717.16,587.91 727.94,570.49 739.00,571.40 C750.74,572.37 756.62,579.24 767.50,585.90 C779.42,593.20 787.52,606.40 796.00,606.30 C810.32,598.39 810.29,561.93 824.50,554.40 C833.09,549.85 841.11,568.15 853.00,576.10 C863.91,583.39 869.30,588.62 881.50,592.50 C892.10,595.86 899.00,591.71 910.00,594.20 C921.80,596.87 930.70,606.40 938.50,605.40 C953.50,594.80 951.65,567.20 967.00,553.90 C974.45,547.44 985.40,551.75 995.50,556.00 C1008.20,561.35 1013.19,579.04 1024.00,577.90 C1035.99,576.64 1039.21,556.11 1052.50,550.00 C1062.01,545.63 1070.76,547.75 1081.00,551.70 C1093.56,556.55 1105.11,581.52 1109.50,572.00 C1127.91,532.04 1123.17,446.31 1138.00,428.00 C1145.97,418.15 1152.88,473.28 1166.50,501.60 C1175.68,520.68 1183.60,528.54 1195.00,546.50 L1195.00,606.40 L625.00,606.40 Z" fill="rgba(0,68,148,0.1)" stroke="none"/>
<path d="M625.00,574.10 C636.40,567.30 644.58,566.50 653.50,557.10 C667.38,542.46 672.55,510.00 682.00,514.00 C695.35,519.64 694.36,564.95 710.50,581.20 C717.16,587.91 727.94,570.49 739.00,571.40 C750.74,572.37 756.62,579.24 767.50,585.90 C779.42,593.20 787.52,606.40 796.00,606.30 C810.32,598.39 810.29,561.93 824.50,554.40 C833.09,549.85 841.11,568.15 853.00,576.10 C863.91,583.39 869.30,588.62 881.50,592.50 C892.10,595.86 899.00,591.71 910.00,594.20 C921.80,596.87 930.70,606.40 938.50,605.40 C953.50,594.80 951.65,567.20 967.00,553.90 C974.45,547.44 985.40,551.75 995.50,556.00 C1008.20,561.35 1013.19,579.04 1024.00,577.90 C1035.99,576.64 1039.21,556.11 1052.50,550.00 C1062.01,545.63 1070.76,547.75 1081.00,551.70 C1093.56,556.55 1105.11,581.52 1109.50,572.00 C1127.91,532.04 1123.17,446.31 1138.00,428.00 C1145.97,418.15 1152.88,473.28 1166.50,501.60 C1175.68,520.68 1183.60,528.54 1195.00,546.50" fill="none" stroke="#004494" stroke-width="3" stroke-linejoin="miter"/>
<circle cx="625.00" cy="574.10" r="3" fill="rgba(0,68,148,0.1)" stroke="#004494" stroke-width="1"/><circle cx="653.50" cy="557.10" r="3" fill="rgba(0,68,148,0.1)" stroke="#004494" stroke-width="1"/><circle cx="682.00" cy="514.00" r="3" fill="rgba(0,68,148,0.1)" stroke="#004494" stroke-width="1"/><circle cx="710.50" cy="581.20" r="3" fill="rgba(0,68,148,0.1)" stroke="#004494" stroke-width="1"/><circle cx="739.00" cy="571.40" r="3" fill="rgba(0,68,148,0.1)" stroke="#004494" stroke-width="1"/><circle cx="767.50" cy="585.90" r="3" fill="rgba(0,68,148,0.1)" stroke="#004494" stroke-width="1"/><circle cx="796.00" cy="606.30" r="3" fill="rgba(0,68,148,0.1)" stroke="#004494" stroke-width="1"/><circle cx="824.50" cy="554.40" r="3" fill="rgba(0,68,148,0.1)" stroke="#004494" stroke-width="1"/><circle cx="853.00" cy="576.10" r="3" fill="rgba(0,68,148,0.1)" stroke="#004494" stroke-width="1"/><circle cx="881.50" cy="592.50" r="3" fill="rgba(0,68,148,0.1)" stroke="#004494" stroke-width="1"/><circle cx="910.00" cy="594.20" r="3" fill="rgba(0,68,148,0.1)" stroke="#004494" stroke-width="1"/><circle cx="938.50" cy="605.40" r="3" fill="rgba(0,68,148,0.1)" stroke="#004494" stroke-width="1"/><circle cx="967.00" cy="553.90" r="3" fill="rgba(0,68,148,0.1)" stroke="#004494" stroke-width="1"/><circle cx="995.50" cy="556.00" r="3" fill="rgba(0,68,148,0.1)" stroke="#004494" stroke-width="1"/><circle cx="1024.00" cy="577.90" r="3" fill="rgba(0,68,148,0.1)" stroke="#004494" stroke-width="1"/><circle cx="1052.50" cy="550.00" r="3" fill="rgba(0,68,148,0.1)" stroke="#004494" stroke-width="1"/><circle cx="1081.00" cy="551.70" r="3" fill="rgba(0,68,148,0.1)" stroke="#004494" stroke-width="1"/><circle cx="1109.50" cy="572.00" r="3" fill="rgba(0,68,148,0.1)" stroke="#004494" stroke-width="1"/><circle cx="1138.00" cy="428.00" r="3" fill="rgba(0,68,148,0.1)" stroke="#004494" stroke-width="1"/><circle cx="1166.50" cy="501.60" r="3" fill="rgba(0,68,148,0.1)" stroke="#004494" stroke-width="1"/><circle cx="1195.00" cy="546.50" r="3" fill="rgba(0,68,148,0.1)" stroke="#004494" stroke-width="1"/>
<text x="614.0" y="610.2" text-anchor="end" font-family="Liberation Sans, sans-serif" font-size="12" fill="#666">0</text>
<text x="614.0" y="578.0" text-anchor="end" font-family="Liberation Sans, sans-serif" font-size="12" fill="#666">1000</text>
<text x="614.0" y="545.9" text-anchor="end" font-family="Liberation Sans, sans-serif" font-size="12" fill="#666">2000</text>
<text x="614.0" y="513.7" text-anchor="end" font-family="Liberation Sans, sans-serif" font-size="12" fill="#666">3000</text>
<text x="614.0" y="481.5" text-anchor="end" font-family="Liberation Sans, sans-serif" font-size="12" fill="#666">4000</text>
<text x="614.0" y="449.4" text-anchor="end" font-family="Liberation Sans, sans-serif" font-size="12" fill="#666">5000</text>
<text x="614.0" y="417.2" text-anchor="end" font-family="Liberation Sans, sans-serif" font-size="12" fill="#666">6000</text>
<text x="1206.0" y="610.2" font-family="Liberation Sans, sans-serif" font-size="12" fill="#666">0</text>
<text x="1206.0" y="578.0" font-family="Liberation Sans, sans-serif" font-size="12" fill="#666">20 000</text>
<text x="1206.0" y="545.9" font-family="Liberation Sans, sans-serif" font-size="12" fill="#666">40 000</text>
<text x="1206.0" y="513.7" font-family="Liberation Sans, sans-serif" font-size="12" fill="#666">60 000</text>
<text x="1206.0" y="481.5" font-family="Liberation Sans, sans-serif" font-size="12" fill="#666">80 000</text>
<text x="1206.0" y="449.4" font-family="Liberation Sans, sans-serif" font-size="12" fill="#666">100 000</text>
<text x="1206.0" y="417.2" font-family="Liberation Sans, sans-serif" font-size="12" fill="#666">120 000</text>
<text x="1285.7" y="596.3" font-family="Liberation Sans, sans-serif" font-size="12" fill="#666">0</text>
<text x="1285.7" y="568.8" font-family="Liberation Sans, sans-serif" font-size="12" fill="#666">5000</text>
<text x="1285.7" y="541.1" font-family="Liberation Sans, sans-serif" font-size="12" fill="#666">10 000</text>
<text x="1285.7" y="513.4" font-family="Liberation Sans, sans-serif" font-size="12" fill="#666">15 000</text>
<text x="1285.7" y="485.8" font-family="Liberation Sans, sans-serif" font-size="12" fill="#666">20 000</text>
<text x="1285.7" y="458.2" font-family="Liberation Sans, sans-serif" font-size="12" fill="#666">25 000</text>
<text x="1285.7" y="430.6" font-family="Liberation Sans, sans-serif" font-size="12" fill="#666">30 000</text>
<text transform="translate(627.00,624.70) rotate(-45.7)" text-anchor="end" font-family="Liberation Sans, sans-serif" font-size="12" fill="#666">01.04</text>
<text transform="translate(655.50,624.70) rotate(-45.7)" text-anchor="end" font-family="Liberation Sans, sans-serif" font-size="12" fill="#666">02.04</text>
<text transform="translate(684.00,624.70) rotate(-45.7)" text-anchor="end" font-family="Liberation Sans, sans-serif" font-size="12" fill="#666">03.04</text>
<text transform="translate(712.50,624.70) rotate(-45.7)" text-anchor="end" font-family="Liberation Sans, sans-serif" font-size="12" fill="#666">04.04</text>
<text transform="translate(741.00,624.70) rotate(-45.7)" text-anchor="end" font-family="Liberation Sans, sans-serif" font-size="12" fill="#666">05.04</text>
<text transform="translate(769.50,624.70) rotate(-45.7)" text-anchor="end" font-family="Liberation Sans, sans-serif" font-size="12" fill="#666">06.04</text>
<text transform="translate(798.00,624.70) rotate(-45.7)" text-anchor="end" font-family="Liberation Sans, sans-serif" font-size="12" fill="#666">07.04</text>
<text transform="translate(826.50,624.70) rotate(-45.7)" text-anchor="end" font-family="Liberation Sans, sans-serif" font-size="12" fill="#666">08.04</text>
<text transform="translate(855.00,624.70) rotate(-45.7)" text-anchor="end" font-family="Liberation Sans, sans-serif" font-size="12" fill="#666">09.04</text>
<text transform="translate(883.50,624.70) rotate(-45.7)" text-anchor="end" font-family="Liberation Sans, sans-serif" font-size="12" fill="#666">10.04</text>
<text transform="translate(912.00,624.70) rotate(-45.7)" text-anchor="end" font-family="Liberation Sans, sans-serif" font-size="12" fill="#666">11.04</text>
<text transform="translate(940.50,624.70) rotate(-45.7)" text-anchor="end" font-family="Liberation Sans, sans-serif" font-size="12" fill="#666">12.04</text>
<text transform="translate(969.00,624.70) rotate(-45.7)" text-anchor="end" font-family="Liberation Sans, sans-serif" font-size="12" fill="#666">13.04</text>
<text transform="translate(997.50,624.70) rotate(-45.7)" text-anchor="end" font-family="Liberation Sans, sans-serif" font-size="12" fill="#666">14.04</text>
<text transform="translate(1026.00,624.70) rotate(-45.7)" text-anchor="end" font-family="Liberation Sans, sans-serif" font-size="12" fill="#666">15.04</text>
<text transform="translate(1054.50,624.70) rotate(-45.7)" text-anchor="end" font-family="Liberation Sans, sans-serif" font-size="12" fill="#666">16.04</text>
<text transform="translate(1083.00,624.70) rotate(-45.7)" text-anchor="end" font-family="Liberation Sans, sans-serif" font-size="12" fill="#666">17.04</text>
<text transform="translate(1111.50,624.70) rotate(-45.7)" text-anchor="end" font-family="Liberation Sans, sans-serif" font-size="12" fill="#666">18.04</text>
<text transform="translate(1140.00,624.70) rotate(-45.7)" text-anchor="end" font-family="Liberation Sans, sans-serif" font-size="12" fill="#666">19.04</text>
<text transform="translate(1168.50,624.70) rotate(-45.7)" text-anchor="end" font-family="Liberation Sans, sans-serif" font-size="12" fill="#666">20.04</text>
<text transform="translate(1197.00,624.70) rotate(-45.7)" text-anchor="end" font-family="Liberation Sans, sans-serif" font-size="12" fill="#666">21.04</text>
<text transform="translate(577.0,509.9) rotate(-90)" text-anchor="middle" font-family="Liberation Sans, sans-serif" font-size="12" fill="#666">Czas (min)</text>
<text transform="translate(1260.3,509.9) rotate(90)" text-anchor="middle" font-family="Liberation Sans, sans-serif" font-size="12" fill="#666">Zadania</text>
<text transform="translate(1332.5,509.9) rotate(90)" text-anchor="middle" font-family="Liberation Sans, sans-serif" font-size="12" fill="#666">Transfer (MB)</text>
<rect x="786.3" y="661.8" width="12" height="11" fill="rgba(0,68,148,0.1)" stroke="#004494" stroke-width="3"/>
<text x="803.8" y="671.2" font-family="Liberation Sans, sans-serif" font-size="11" fill="#666">Czas (min)</text>
<rect x="866.9" y="661.8" width="12" height="11" fill="rgba(0,0,0,0.1)" stroke="#FFD617" stroke-width="3" stroke-dasharray="5 5"/>
<text x="884.4" y="671.2" font-family="Liberation Sans, sans-serif" font-size="11" fill="#666">Zadania</text>
<rect x="934.0" y="661.8" width="12" height="11" fill="none" stroke="#38a169" stroke-width="3"/>
<text x="951.5" y="671.2" font-family="Liberation Sans, sans-serif" font-size="11" fill="#666">Odebrano (MB)</text>
<rect x="1037.6" y="661.8" width="12" height="11" fill="none" stroke="#e53e3e" stroke-width="3"/>
<text x="1055.1" y="671.2" font-family="Liberation Sans, sans-serif" font-size="11" fill="#666">Wysłano (MB)</text></svg>
<svg class="chart" style="left:562px;top:841px" width="786" height="290" viewBox="562 841 786 290"><line x1="635.5" y1="854.4" x2="635.5" y2="1054.4" stroke="rgba(0,0,0,0.1)" stroke-width="1"/>
<line x1="672.5" y1="854.4" x2="672.5" y2="1054.4" stroke="rgba(0,0,0,0.1)" stroke-width="1"/>
<line x1="709.5" y1="854.4" x2="709.5" y2="1054.4" stroke="rgba(0,0,0,0.1)" stroke-width="1"/>
<line x1="747.5" y1="854.4" x2="747.5" y2="1054.4" stroke="rgba(0,0,0,0.1)" stroke-width="1"/>
<line x1="784.5" y1="854.4" x2="784.5" y2="1054.4" stroke="rgba(0,0,0,0.1)" stroke-width="1"/>
<line x1="821.5" y1="854.4" x2="821.5" y2="1054.4" stroke="rgba(0,0,0,0.1)" stroke-width="1"/>
<line x1="859.5" y1="854.4" x2="859.5" y2="1054.4" stroke="rgba(0,0,0,0.1)" stroke-width="1"/>
<line x1="896.5" y1="854.4" x2="896.5" y2="1054.4" stroke="rgba(0,0,0,0.1)" stroke-width="1"/>
<line x1="933.5" y1="854.4" x2="933.5" y2="1054.4" stroke="rgba(0,0,0,0.1)" stroke-width="1"/>
<line x1="971.5" y1="854.4" x2="971.5" y2="1054.4" stroke="rgba(0,0,0,0.1)" stroke-width="1"/>
<line x1="1008.5" y1="854.4" x2="1008.5" y2="1054.4" stroke="rgba(0,0,0,0.1)" stroke-width="1"/>
<line x1="1045.5" y1="854.4" x2="1045.5" y2="1054.4" stroke="rgba(0,0,0,0.1)" stroke-width="1"/>
<line x1="1083.5" y1="854.4" x2="1083.5" y2="1054.4" stroke="rgba(0,0,0,0.1)" stroke-width="1"/>
<line x1="1120.5" y1="854.4" x2="1120.5" y2="1054.4" stroke="rgba(0,0,0,0.1)" stroke-width="1"/>
<line x1="1157.5" y1="854.4" x2="1157.5" y2="1054.4" stroke="rgba(0,0,0,0.1)" stroke-width="1"/>
<line x1="1195.5" y1="854.4" x2="1195.5" y2="1054.4" stroke="rgba(0,0,0,0.1)" stroke-width="1"/>
<line x1="627.0" y1="1046.5" x2="1195.0" y2="1046.5" stroke="rgba(0,0,0,0.1)" stroke-width="1"/>
<line x1="627.0" y1="1022.5" x2="1195.0" y2="1022.5" stroke="rgba(0,0,0,0.1)" stroke-width="1"/>
<line x1="627.0" y1="998.5" x2="1195.0" y2="998.5" stroke="rgba(0,0,0,0.1)" stroke-width="1"/>
<line x1="627.0" y1="974.5" x2="1195.0" y2="974.5" stroke="rgba(0,0,0,0.1)" stroke-width="1"/>
<line x1="627.0" y1="950.5" x2="1195.0" y2="950.5" stroke="rgba(0,0,0,0.1)" stroke-width="1"/>
<line x1="627.0" y1="926.5" x2="1195.0" y2="926.5" stroke="rgba(0,0,0,0.1)" stroke-width="1"/>
<line x1="627.0" y1="902.5" x2="1195.0" y2="902.5" stroke="rgba(0,0,0,0.1)" stroke-width="1"/>
<line x1="627.0" y1="878.5" x2="1195.0" y2="878.5" stroke="rgba(0,0,0,0.1)" stroke-width="1"/>
<line x1="627.0" y1="854.5" x2="1195.0" y2="854.5" stroke="rgba(0,0,0,0.1)" stroke-width="1"/>
<line x1="1195.0" y1="1046.5" x2="1203.0" y2="1046.5" stroke="rgba(0,0,0,0.1)" stroke-width="1"/>
<line x1="1195.0" y1="1025.5" x2="1203.0" y2="1025.5" stroke="rgba(0,0,0,0.1)" stroke-width="1"/>
<line x1="1195.0" y1="1003.5" x2="1203.0" y2="1003.5" stroke="rgba(0,0,0,0.1)" stroke-width="1"/>
<line x1="1195.0" y1="982.5" x2="1203.0" y2="982.5" stroke="rgba(0,0,0,0.1)" stroke-width="1"/>
<line x1="1195.0" y1="961.5" x2="1203.0" y2="961.5" stroke="rgba(0,0,0,0.1)" stroke-width="1"/>
<line x1="1195.0" y1="939.5" x2="1203.0" y2="939.5" stroke="rgba(0,0,0,0.1)" stroke-width="1"/>
<line x1="1195.0" y1="918.5" x2="1203.0" y2="918.5" stroke="rgba(0,0,0,0.1)" stroke-width="1"/>
<line x1="1195.0" y1="897.5" x2="1203.0" y2="897.5" stroke="rgba(0,0,0,0.1)" stroke-width="1"/>
<line x1="1195.0" y1="875.5" x2="1203.0" y2="875.5" stroke="rgba(0,0,0,0.1)" stroke-width="1"/>
<line x1="1195.0" y1="854.5" x2="1203.0" y2="854.5" stroke="rgba(0,0,0,0.1)" stroke-width="1"/>
<line x1="635.5" y1="854.4" x2="635.5" y2="1046.4" stroke="rgba(0,0,0,0.1)" stroke-width="1"/>
<line x1="1195.5" y1="854.4" x2="1195.5" y2="1046.4" stroke="rgba(0,0,0,0.1)" stroke-width="1"/>
<line x1="635.0" y1="1046.5" x2="1195.0" y2="1046.5" stroke="rgba(0,0,0,0.1)" stroke-width="1"/>
<line x1="1274.5" y1="854.4" x2="1274.5" y2="1047.4" stroke="rgba(0,0,0,0.1)" stroke-width="1"/>
<line x1="1274.7" y1="1033.5" x2="1282.7" y2="1033.5" stroke="rgba(0,0,0,0.1)" stroke-width="1"/>
<line x1="1274.7" y1="1005.5" x2="1282.7" y2="1005.5" stroke="rgba(0,0,0,0.1)" stroke-width="1"/>
<line x1="1274.7" y1="978.5" x2="1282.7" y2="978.5" stroke="rgba(0,0,0,0.1)" stroke-width="1"/>
<line x1="1274.7" y1="950.5" x2="1282.7" y2="950.5" stroke="rgba(0,0,0,0.1)" stroke-width="1"/>
<line x1="1274.7" y1="922.5" x2="1282.7" y2="922.5" stroke="rgba(0,0,0,0.1)" stroke-width="1"/>
<line x1="1274.7" y1="895.5" x2="1282.7" y2="895.5" stroke="rgba(0,0,0,0.1)" stroke-width="1"/>
<line x1="1274.7" y1="867.5" x2="1282.7" y2="867.5" stroke="rgba(0,0,0,0.1)" stroke-width="1"/>
<path d="M635.00,1031.70 C642.47,1031.70 646.26,1032.35 653.67,1031.70 C661.19,1031.03 664.81,1029.09 672.33,1028.40 C679.74,1027.73 683.53,1028.30 691.00,1028.30 C698.47,1028.30 702.24,1027.82 709.67,1028.40 C717.17,1028.98 720.85,1031.04 728.33,1031.20 C735.78,1031.36 739.51,1029.46 747.00,1029.20 C754.45,1028.94 758.20,1029.82 765.67,1029.90 C773.13,1029.98 776.87,1029.60 784.33,1029.60 C791.80,1029.60 795.53,1029.74 803.00,1029.90 C810.47,1030.06 814.20,1030.46 821.67,1030.40 C829.14,1030.34 832.86,1029.76 840.33,1029.60 C847.80,1029.44 851.53,1029.60 859.00,1029.60 C866.47,1029.60 870.25,1028.96 877.67,1029.60 C885.19,1030.24 888.81,1032.05 896.33,1032.80 C903.75,1033.53 907.56,1033.62 915.00,1033.30 C922.49,1032.98 926.18,1031.86 933.67,1031.20 C941.12,1030.54 944.89,1030.76 952.33,1030.00 C959.83,1029.24 963.59,1027.06 971.00,1027.40 C978.53,1027.74 982.10,1030.89 989.67,1031.70 C997.04,1032.49 1000.87,1031.24 1008.33,1031.40 C1015.81,1031.56 1019.53,1032.28 1027.00,1032.50 C1034.46,1032.72 1038.20,1032.44 1045.67,1032.50 C1053.13,1032.56 1056.87,1032.90 1064.33,1032.80 C1071.80,1032.70 1075.53,1032.16 1083.00,1032.00 C1090.46,1031.84 1094.20,1031.84 1101.67,1032.00 C1109.14,1032.16 1112.86,1032.58 1120.33,1032.80 C1127.80,1033.02 1131.53,1033.04 1139.00,1033.10 C1146.47,1033.16 1150.20,1033.10 1157.67,1033.10 C1165.13,1033.10 1168.87,1033.32 1176.33,1033.10 C1183.81,1032.88 1187.53,1032.44 1195.00,1032.00" fill="none" stroke="#e53e3e" stroke-width="3" stroke-linejoin="miter"/>
<circle cx="635.00" cy="1031.70" r="3" fill="none" stroke="#e53e3e" stroke-width="1"/><circle cx="653.67" cy="1031.70" r="3" fill="none" stroke="#e53e3e" stroke-width="1"/><circle cx="672.33" cy="1028.40" r="3" fill="none" stroke="#e53e3e" stroke-width="1"/><circle cx="691.00" cy="1028.30" r="3" fill="none" stroke="#e53e3e" stroke-width="1"/><circle cx="709.67" cy="1028.40" r="3" fill="none" stroke="#e53e3e" stroke-width="1"/><circle cx="728.33" cy="1031.20" r="3" fill="none" stroke="#e53e3e" stroke-width="1"/><circle cx="747.00" cy="1029.20" r="3" fill="none" stroke="#e53e3e" stroke-width="1"/><circle cx="765.67" cy="1029.90" r="3" fill="none" stroke="#e53e3e" stroke-width="1"/><circle cx="784.33" cy="1029.60" r="3" fill="none" stroke="#e53e3e" stroke-width="1"/><circle cx="803.00" cy="1029.90" r="3" fill="none" stroke="#e53e3e" stroke-width="1"/><circle cx="821.67" cy="1030.40" r="3" fill="none" stroke="#e53e3e" stroke-width="1"/><circle cx="840.33" cy="1029.60" r="3" fill="none" stroke="#e53e3e" stroke-width="1"/><circle cx="859.00" cy="1029.60" r="3" fill="none" stroke="#e53e3e" stroke-width="1"/><circle cx="877.67" cy="1029.60" r="3" fill="none" stroke="#e53e3e" stroke-width="1"/><circle cx="896.33" cy="1032.80" r="3" fill="none" stroke="#e53e3e" stroke-width="1"/><circle cx="915.00" cy="1033.30" r="3" fill="none" stroke="#e53e3e" stroke-width="1"/><circle cx="933.67" cy="1031.20" r="3" fill="none" stroke="#e53e3e" stroke-width="1"/><circle cx="952.33" cy="1030.00" r="3" fill="none" stroke="#e53e3e" stroke-width="1"/><circle cx="971.00" cy="1027.40" r="3" fill="none" stroke="#e53e3e" stroke-width="1"/><circle cx="989.67" cy="1031.70" r="3" fill="none" stroke="#e53e3e" stroke-width="1"/><circle cx="1008.33" cy="1031.40" r="3" fill="none" stroke="#e53e3e" stroke-width="1"/><circle cx="1027.00" cy="1032.50" r="3" fill="none" stroke="#e53e3e" stroke-width="1"/><circle cx="1045.67" cy="1032.50" r="3" fill="none" stroke="#e53e3e" stroke-width="1"/><circle cx="1064.33" cy="1032.80" r="3" fill="none" stroke="#e53e3e" stroke-width="1"/><circle cx="1083.00" cy="1032.00" r="3" fill="none" stroke="#e53e3e" stroke-width="1"/><circle cx="1101.67" cy="1032.00" r="3" fill="none" stroke="#e53e3e" stroke-width="1"/><circle cx="1120.33" cy="1032.80" r="3" fill="none" stroke="#e53e3e" stroke-width="1"/><circle cx="1139.00" cy="1033.10" r="3" fill="none" stroke="#e53e3e" stroke-width="1"/><circle cx="1157.67" cy="1033.10" r="3" fill="none" stroke="#e53e3e" stroke-width="1"/><circle cx="1176.33" cy="1033.10" r="3" fill="none" stroke="#e53e3e" stroke-width="1"/><circle cx="1195.00" cy="1032.00" r="3" fill="none" stroke="#e53e3e" stroke-width="1"/>
<path d="M635.00,1018.20 C642.47,1018.40 650.14,1024.08 653.67,1018.70 C665.07,1001.32 662.48,983.02 672.33,961.30 C677.41,950.10 685.72,947.52 691.00,936.40 C700.65,916.08 704.91,874.22 709.67,882.70 C719.85,900.86 715.60,965.28 728.33,1003.00 C730.53,1009.52 739.21,994.30 747.00,993.30 C754.15,992.38 759.61,1000.85 765.67,998.20 C774.54,994.33 776.64,977.47 784.33,977.00 C791.57,976.55 794.48,989.96 803.00,995.90 C809.41,1000.36 814.39,1003.51 821.67,1003.00 C829.33,1002.47 832.43,995.08 840.33,993.30 C847.36,991.72 851.53,994.50 859.00,994.60 C866.46,994.70 873.13,989.22 877.67,993.80 C888.06,1004.30 885.94,1021.30 896.33,1032.30 C900.87,1037.10 909.49,1036.99 915.00,1033.30 C924.43,1026.99 924.64,1015.88 933.67,1007.30 C939.57,1001.68 946.23,1003.26 952.33,997.80 C961.17,989.90 965.33,970.56 971.00,973.90 C980.26,979.36 978.83,1006.88 989.67,1019.80 C993.76,1024.68 1001.06,1017.45 1008.33,1018.40 C1015.99,1019.41 1019.33,1023.30 1027.00,1024.70 C1034.27,1026.02 1038.43,1023.79 1045.67,1025.20 C1053.36,1026.71 1057.56,1033.49 1064.33,1032.00 C1072.50,1030.21 1074.61,1020.28 1083.00,1017.00 C1089.54,1014.44 1094.89,1015.06 1101.67,1017.40 C1109.82,1020.22 1112.22,1026.55 1120.33,1029.90 C1127.15,1032.71 1131.49,1032.22 1139.00,1032.80 C1146.42,1033.38 1150.20,1032.90 1157.67,1032.80 C1165.13,1032.70 1169.12,1033.77 1176.33,1032.30 C1184.05,1030.73 1187.53,1028.04 1195.00,1025.20" fill="none" stroke="#38a169" stroke-width="3" stroke-linejoin="miter"/>
<circle cx="635.00" cy="1018.20" r="3" fill="none" stroke="#38a169" stroke-width="1"/><circle cx="653.67" cy="1018.70" r="3" fill="none" stroke="#38a169" stroke-width="1"/><circle cx="672.33" cy="961.30" r="3" fill="none" stroke="#38a169" stroke-width="1"/><circle cx="691.00" cy="936.40" r="3" fill="none" stroke="#38a169" stroke-width="1"/><circle cx="709.67" cy="882.70" r="3" fill="none" stroke="#38a169" stroke-width="1"/><circle cx="728.33" cy="1003.00" r="3" fill="none" stroke="#38a169" stroke-width="1"/><circle cx="747.00" cy="993.30" r="3" fill="none" stroke="#38a169" stroke-width="1"/><circle cx="765.67" cy="998.20" r="3" fill="none" stroke="#38a169" stroke-width="1"/><circle cx="784.33" cy="977.00" r="3" fill="none" stroke="#38a169" stroke-width="1"/><circle cx="803.00" cy="995.90" r="3" fill="none" stroke="#38a169" stroke-width="1"/><circle cx="821.67" cy="1003.00" r="3" fill="none" stroke="#38a169" stroke-width="1"/><circle cx="840.33" cy="993.30" r="3" fill="none" stroke="#38a169" stroke-width="1"/><circle cx="859.00" cy="994.60" r="3" fill="none" stroke="#38a169" stroke-width="1"/><circle cx="877.67" cy="993.80" r="3" fill="none" stroke="#38a169" stroke-width="1"/><circle cx="896.33" cy="1032.30" r="3" fill="none" stroke="#38a169" stroke-width="1"/><circle cx="915.00" cy="1033.30" r="3" fill="none" stroke="#38a169" stroke-width="1"/><circle cx="933.67" cy="1007.30" r="3" fill="none" stroke="#38a169" stroke-width="1"/><circle cx="952.33" cy="997.80" r="3" fill="none" stroke="#38a169" stroke-width="1"/><circle cx="971.00" cy="973.90" r="3" fill="none" stroke="#38a169" stroke-width="1"/><circle cx="989.67" cy="1019.80" r="3" fill="none" stroke="#38a169" stroke-width="1"/><circle cx="1008.33" cy="1018.40" r="3" fill="none" stroke="#38a169" stroke-width="1"/><circle cx="1027.00" cy="1024.70" r="3" fill="none" stroke="#38a169" stroke-width="1"/><circle cx="1045.67" cy="1025.20" r="3" fill="none" stroke="#38a169" stroke-width="1"/><circle cx="1064.33" cy="1032.00" r="3" fill="none" stroke="#38a169" stroke-width="1"/><circle cx="1083.00" cy="1017.00" r="3" fill="none" stroke="#38a169" stroke-width="1"/><circle cx="1101.67" cy="1017.40" r="3" fill="none" stroke="#38a169" stroke-width="1"/><circle cx="1120.33" cy="1029.90" r="3" fill="none" stroke="#38a169" stroke-width="1"/><circle cx="1139.00" cy="1032.80" r="3" fill="none" stroke="#38a169" stroke-width="1"/><circle cx="1157.67" cy="1032.80" r="3" fill="none" stroke="#38a169" stroke-width="1"/><circle cx="1176.33" cy="1032.30" r="3" fill="none" stroke="#38a169" stroke-width="1"/><circle cx="1195.00" cy="1025.20" r="3" fill="none" stroke="#38a169" stroke-width="1"/>
<path d="M635.00,979.30 C642.47,977.74 646.33,977.44 653.67,975.40 C661.27,973.28 664.66,970.36 672.33,968.90 C679.59,967.52 683.54,968.68 691.00,968.30 C698.47,967.92 702.27,968.01 709.67,967.00 C717.20,965.97 726.06,969.79 728.33,963.20 C740.99,926.51 735.01,886.48 747.00,858.80 C749.95,854.40 757.24,874.61 765.67,877.00 C772.18,878.85 777.47,868.11 784.33,869.40 C792.40,870.91 795.85,877.79 803.00,884.00 C810.78,890.75 816.60,905.72 821.67,901.80 C831.54,894.16 829.45,868.49 840.33,855.10 C844.38,854.40 851.55,855.38 859.00,855.90 C866.48,856.42 876.30,854.40 877.67,857.70 C891.23,925.53 882.79,974.14 896.33,1042.60 C897.72,1046.40 912.27,1046.40 915.00,1046.40 C927.20,1020.52 925.12,996.31 933.67,963.40 C940.05,938.83 942.07,913.34 952.33,902.70 C957.00,897.86 966.25,914.40 971.00,924.70 C981.18,946.80 978.36,967.86 989.67,983.70 C993.29,988.78 1004.86,971.79 1008.33,977.00 C1019.79,994.15 1015.40,1019.50 1027.00,1039.60 C1030.34,1045.38 1038.22,1040.72 1045.67,1041.70 C1053.15,1042.68 1056.83,1044.00 1064.33,1044.50 C1071.76,1045.00 1075.53,1044.36 1083.00,1044.20 C1090.47,1044.04 1094.22,1043.38 1101.67,1043.70 C1109.16,1044.02 1112.85,1045.26 1120.33,1045.80 C1127.78,1046.34 1131.53,1046.28 1139.00,1046.40 C1146.46,1046.40 1150.20,1046.40 1157.67,1046.40 C1165.13,1046.38 1169.02,1046.40 1176.33,1046.30 C1183.95,1045.18 1187.53,1043.06 1195.00,1040.90" fill="none" stroke="#FFD617" stroke-width="3" stroke-linejoin="miter" stroke-dasharray="5 5" stroke-dashoffset="0"/>
<circle cx="635.00" cy="979.30" r="3" fill="rgba(0,0,0,0.1)" stroke="#FFD617" stroke-width="1"/><circle cx="653.67" cy="975.40" r="3" fill="rgba(0,0,0,0.1)" stroke="#FFD617" stroke-width="1"/><circle cx="672.33" cy="968.90" r="3" fill="rgba(0,0,0,0.1)" stroke="#FFD617" stroke-width="1"/><circle cx="691.00" cy="968.30" r="3" fill="rgba(0,0,0,0.1)" stroke="#FFD617" stroke-width="1"/><circle cx="709.67" cy="967.00" r="3" fill="rgba(0,0,0,0.1)" stroke="#FFD617" stroke-width="1"/><circle cx="728.33" cy="963.20" r="3" fill="rgba(0,0,0,0.1)" stroke="#FFD617" stroke-width="1"/><circle cx="747.00" cy="858.80" r="3" fill="rgba(0,0,0,0.1)" stroke="#FFD617" stroke-width="1"/><circle cx="765.67" cy="877.00" r="3" fill="rgba(0,0,0,0.1)" stroke="#FFD617" stroke-width="1"/><circle cx="784.33" cy="869.40" r="3" fill="rgba(0,0,0,0.1)" stroke="#FFD617" stroke-width="1"/><circle cx="803.00" cy="884.00" r="3" fill="rgba(0,0,0,0.1)" stroke="#FFD617" stroke-width="1"/><circle cx="821.67" cy="901.80" r="3" fill="rgba(0,0,0,0.1)" stroke="#FFD617" stroke-width="1"/><circle cx="840.33" cy="855.10" r="3" fill="rgba(0,0,0,0.1)" stroke="#FFD617" stroke-width="1"/><circle cx="859.00" cy="855.90" r="3" fill="rgba(0,0,0,0.1)" stroke="#FFD617" stroke-width="1"/><circle cx="877.67" cy="857.70" r="3" fill="rgba(0,0,0,0.1)" stroke="#FFD617" stroke-width="1"/><circle cx="896.33" cy="1042.60" r="3" fill="rgba(0,0,0,0.1)" stroke="#FFD617" stroke-width="1"/><circle cx="915.00" cy="1046.40" r="3" fill="rgba(0,0,0,0.1)" stroke="#FFD617" stroke-width="1"/><circle cx="933.67" cy="963.40" r="3" fill="rgba(0,0,0,0.1)" stroke="#FFD617" stroke-width="1"/><circle cx="952.33" cy="902.70" r="3" fill="rgba(0,0,0,0.1)" stroke="#FFD617" stroke-width="1"/><circle cx="971.00" cy="924.70" r="3" fill="rgba(0,0,0,0.1)" stroke="#FFD617" stroke-width="1"/><circle cx="989.67" cy="983.70" r="3" fill="rgba(0,0,0,0.1)" stroke="#FFD617" stroke-width="1"/><circle cx="1008.33" cy="977.00" r="3" fill="rgba(0,0,0,0.1)" stroke="#FFD617" stroke-width="1"/><circle cx="1027.00" cy="1039.60" r="3" fill="rgba(0,0,0,0.1)" stroke="#FFD617" stroke-width="1"/><circle cx="1045.67" cy="1041.70" r="3" fill="rgba(0,0,0,0.1)" stroke="#FFD617" stroke-width="1"/><circle cx="1064.33" cy="1044.50" r="3" fill="rgba(0,0,0,0.1)" stroke="#FFD617" stroke-width="1"/><circle cx="1083.00" cy="1044.20" r="3" fill="rgba(0,0,0,0.1)" stroke="#FFD617" stroke-width="1"/><circle cx="1101.67" cy="1043.70" r="3" fill="rgba(0,0,0,0.1)" stroke="#FFD617" stroke-width="1"/><circle cx="1120.33" cy="1045.80" r="3" fill="rgba(0,0,0,0.1)" stroke="#FFD617" stroke-width="1"/><circle cx="1139.00" cy="1046.40" r="3" fill="rgba(0,0,0,0.1)" stroke="#FFD617" stroke-width="1"/><circle cx="1157.67" cy="1046.40" r="3" fill="rgba(0,0,0,0.1)" stroke="#FFD617" stroke-width="1"/><circle cx="1176.33" cy="1046.30" r="3" fill="rgba(0,0,0,0.1)" stroke="#FFD617" stroke-width="1"/><circle cx="1195.00" cy="1040.90" r="3" fill="rgba(0,0,0,0.1)" stroke="#FFD617" stroke-width="1"/>
<path d="M635.00,964.20 C642.47,963.04 648.91,966.23 653.67,961.30 C663.84,950.75 663.13,938.47 672.33,925.50 C678.06,917.43 683.96,915.84 691.00,908.70 C698.90,900.68 705.15,882.62 709.67,887.60 C720.09,899.10 721.54,952.32 728.33,949.90 C736.47,947.00 735.61,892.67 747.00,874.30 C750.54,868.59 757.82,888.86 765.67,889.70 C772.76,890.46 778.20,876.03 784.33,878.30 C793.13,881.55 794.58,894.32 803.00,903.50 C809.51,910.60 816.68,922.90 821.67,919.00 C831.62,911.22 829.55,887.21 840.33,874.30 C844.49,869.33 851.55,874.70 859.00,874.30 C866.49,873.90 876.19,865.65 877.67,872.30 C891.12,932.81 882.90,979.57 896.33,1042.20 C897.84,1046.40 912.06,1046.40 915.00,1046.40 C927.00,1023.36 925.49,1000.67 933.67,970.50 C940.42,945.59 941.52,921.97 952.33,908.70 C956.45,903.65 966.12,916.45 971.00,924.70 C981.05,941.69 979.01,960.67 989.67,971.80 C993.95,976.27 1004.67,958.63 1008.33,963.70 C1019.61,979.31 1020.65,1027.38 1027.00,1023.50 C1035.58,1018.26 1038.64,938.85 1045.67,940.90 C1053.58,943.21 1055.91,1029.37 1064.33,1034.40 C1070.84,1038.29 1072.63,975.61 1083.00,963.20 C1087.57,957.73 1096.33,978.02 1101.67,989.70 C1111.27,1010.74 1109.03,1027.83 1120.33,1045.00 C1123.96,1046.40 1131.52,1046.12 1139.00,1046.40 C1146.46,1046.40 1150.20,1046.40 1157.67,1046.40 C1165.13,1046.38 1169.29,1046.40 1176.33,1046.30 C1184.22,1044.29 1187.53,1040.66 1195.00,1036.90 L1195.00,1046.40 L635.00,1046.40 Z" fill="rgba(0,68,148,0.1)" stroke="none"/>
<path d="M635.00,964.20 C642.47,963.04 648.91,966.23 653.67,961.30 C663.84,950.75 663.13,938.47 672.33,925.50 C678.06,917.43 683.96,915.84 691.00,908.70 C698.90,900.68 705.15,882.62 709.67,887.60 C720.09,899.10 721.54,952.32 728.33,949.90 C736.47,947.00 735.61,892.67 747.00,874.30 C750.54,868.59 757.82,888.86 765.67,889.70 C772.76,890.46 778.20,876.03 784.33,878.30 C793.13,881.55 794.58,894.32 803.00,903.50 C809.51,910.60 816.68,922.90 821.67,919.00 C831.62,911.22 829.55,887.21 840.33,874.30 C844.49,869.33 851.55,874.70 859.00,874.30 C866.49,873.90 876.19,865.65 877.67,872.30 C891.12,932.81 882.90,979.57 896.33,1042.20 C897.84,1046.40 912.06,1046.40 915.00,1046.40 C927.00,1023.36 925.49,1000.67 933.67,970.50 C940.42,945.59 941.52,921.97 952.33,908.70 C956.45,903.65 966.12,916.45 971.00,924.70 C981.05,941.69 979.01,960.67 989.67,971.80 C993.95,976.27 1004.67,958.63 1008.33,963.70 C1019.61,979.31 1020.65,1027.38 1027.00,1023.50 C1035.58,1018.26 1038.64,938.85 1045.67,940.90 C1053.58,943.21 1055.91,1029.37 1064.33,1034.40 C1070.84,1038.29 1072.63,975.61 1083.00,963.20 C1087.57,957.73 1096.33,978.02 1101.67,989.70 C1111.27,1010.74 1109.03,1027.83 1120.33,1045.00 C1123.96,1046.40 1131.52,1046.12 1139.00,1046.40 C1146.46,1046.40 1150.20,1046.40 1157.67,1046.40 C1165.13,1046.38 1169.29,1046.40 1176.33,1046.30 C1184.22,1044.29 1187.53,1040.66 1195.00,1036.90" fill="none" stroke="#004494" stroke-width="3" stroke-linejoin="miter"/>
<circle cx="635.00" cy="964.20" r="3" fill="rgba(0,68,148,0.1)" stroke="#004494" stroke-width="1"/><circle cx="653.67" cy="961.30" r="3" fill="rgba(0,68,148,0.1)" stroke="#004494" stroke-width="1"/><circle cx="672.33" cy="925.50" r="3" fill="rgba(0,68,148,0.1)" stroke="#004494" stroke-width="1"/><circle cx="691.00" cy="908.70" r="3" fill="rgba(0,68,148,0.1)" stroke="#004494" stroke-width="1"/><circle cx="709.67" cy="887.60" r="3" fill="rgba(0,68,148,0.1)" stroke="#004494" stroke-width="1"/><circle cx="728.33" cy="949.90" r="3" fill="rgba(0,68,148,0.1)" stroke="#004494" stroke-width="1"/><circle cx="747.00" cy="874.30" r="3" fill="rgba(0,68,148,0.1)" stroke="#004494" stroke-width="1"/><circle cx="765.67" cy="889.70" r="3" fill="rgba(0,68,148,0.1)" stroke="#004494" stroke-width="1"/><circle cx="784.33" cy="878.30" r="3" fill="rgba(0,68,148,0.1)" stroke="#004494" stroke-width="1"/><circle cx="803.00" cy="903.50" r="3" fill="rgba(0,68,148,0.1)" stroke="#004494" stroke-width="1"/><circle cx="821.67" cy="919.00" r="3" fill="rgba(0,68,148,0.1)" stroke="#004494" stroke-width="1"/><circle cx="840.33" cy="874.30" r="3" fill="rgba(0,68,148,0.1)" stroke="#004494" stroke-width="1"/><circle cx="859.00" cy="874.30" r="3" fill="rgba(0,68,148,0.1)" stroke="#004494" stroke-width="1"/><circle cx="877.67" cy="872.30" r="3" fill="rgba(0,68,148,0.1)" stroke="#004494" stroke-width="1"/><circle cx="896.33" cy="1042.20" r="3" fill="rgba(0,68,148,0.1)" stroke="#004494" stroke-width="1"/><circle cx="915.00" cy="1046.40" r="3" fill="rgba(0,68,148,0.1)" stroke="#004494" stroke-width="1"/><circle cx="933.67" cy="970.50" r="3" fill="rgba(0,68,148,0.1)" stroke="#004494" stroke-width="1"/><circle cx="952.33" cy="908.70" r="3" fill="rgba(0,68,148,0.1)" stroke="#004494" stroke-width="1"/><circle cx="971.00" cy="924.70" r="3" fill="rgba(0,68,148,0.1)" stroke="#004494" stroke-width="1"/><circle cx="989.67" cy="971.80" r="3" fill="rgba(0,68,148,0.1)" stroke="#004494" stroke-width="1"/><circle cx="1008.33" cy="963.70" r="3" fill="rgba(0,68,148,0.1)" stroke="#004494" stroke-width="1"/><circle cx="1027.00" cy="1023.50" r="3" fill="rgba(0,68,148,0.1)" stroke="#004494" stroke-width="1"/><circle cx="1045.67" cy="940.90" r="3" fill="rgba(0,68,148,0.1)" stroke="#004494" stroke-width="1"/><circle cx="1064.33" cy="1034.40" r="3" fill="rgba(0,68,148,0.1)" stroke="#004494" stroke-width="1"/><circle cx="1083.00" cy="963.20" r="3" fill="rgba(0,68,148,0.1)" stroke="#004494" stroke-width="1"/><circle cx="1101.67" cy="989.70" r="3" fill="rgba(0,68,148,0.1)" stroke="#004494" stroke-width="1"/><circle cx="1120.33" cy="1045.00" r="3" fill="rgba(0,68,148,0.1)" stroke="#004494" stroke-width="1"/><circle cx="1139.00" cy="1046.40" r="3" fill="rgba(0,68,148,0.1)" stroke="#004494" stroke-width="1"/><circle cx="1157.67" cy="1046.40" r="3" fill="rgba(0,68,148,0.1)" stroke="#004494" stroke-width="1"/><circle cx="1176.33" cy="1046.30" r="3" fill="rgba(0,68,148,0.1)" stroke="#004494" stroke-width="1"/><circle cx="1195.00" cy="1036.90" r="3" fill="rgba(0,68,148,0.1)" stroke="#004494" stroke-width="1"/>
<text x="624.0" y="1050.2" text-anchor="end" font-family="Liberation Sans, sans-serif" font-size="12" fill="#666">0</text>
<text x="624.0" y="1026.2" text-anchor="end" font-family="Liberation Sans, sans-serif" font-size="12" fill="#666">2000</text>
<text x="624.0" y="1002.2" text-anchor="end" font-family="Liberation Sans, sans-serif" font-size="12" fill="#666">4000</text>
<text x="624.0" y="978.2" text-anchor="end" font-family="Liberation Sans, sans-serif" font-size="12" fill="#666">6000</text>
<text x="624.0" y="954.2" text-anchor="end" font-family="Liberation Sans, sans-serif" font-size="12" fill="#666">8000</text>
<text x="624.0" y="930.2" text-anchor="end" font-family="Liberation Sans, sans-serif" font-size="12" fill="#666">10 000</text>
<text x="624.0" y="906.2" text-anchor="end" font-family="Liberation Sans, sans-serif" font-size="12" fill="#666">12 000</text>
<text x="624.0" y="882.2" text-anchor="end" font-family="Liberation Sans, sans-serif" font-size="12" fill="#666">14 000</text>
<text x="624.0" y="858.2" text-anchor="end" font-family="Liberation Sans, sans-serif" font-size="12" fill="#666">16 000</text>
<text x="1206.0" y="1050.2" font-family="Liberation Sans, sans-serif" font-size="12" fill="#666">0</text>
<text x="1206.0" y="1028.9" font-family="Liberation Sans, sans-serif" font-size="12" fill="#666">100 000</text>
<text x="1206.0" y="1007.5" font-family="Liberation Sans, sans-serif" font-size="12" fill="#666">200 000</text>
<text x="1206.0" y="986.2" font-family="Liberation Sans, sans-serif" font-size="12" fill="#666">300 000</text>
<text x="1206.0" y="964.9" font-family="Liberation Sans, sans-serif" font-size="12" fill="#666">400 000</text>
<text x="1206.0" y="943.5" font-family="Liberation Sans, sans-serif" font-size="12" fill="#666">500 000</text>
<text x="1206.0" y="922.2" font-family="Liberation Sans, sans-serif" font-size="12" fill="#666">600 000</text>
<text x="1206.0" y="900.9" font-family="Liberation Sans, sans-serif" font-size="12" fill="#666">700 000</text>
<text x="1206.0" y="879.5" font-family="Liberation Sans, sans-serif" font-size="12" fill="#666">800 000</text>
<text x="1206.0" y="858.2" font-family="Liberation Sans, sans-serif" font-size="12" fill="#666">900 000</text>
<text x="1285.7" y="1037.1" font-family="Liberation Sans, sans-serif" font-size="12" fill="#666">0</text>
<text x="1285.7" y="1009.4" font-family="Liberation Sans, sans-serif" font-size="12" fill="#666">10 000</text>
<text x="1285.7" y="981.8" font-family="Liberation Sans, sans-serif" font-size="12" fill="#666">20 000</text>
<text x="1285.7" y="954.1" font-family="Liberation Sans, sans-serif" font-size="12" fill="#666">30 000</text>
<text x="1285.7" y="926.4" font-family="Liberation Sans, sans-serif" font-size="12" fill="#666">40 000</text>
<text x="1285.7" y="898.8" font-family="Liberation Sans, sans-serif" font-size="12" fill="#666">50 000</text>
<text x="1285.7" y="871.1" font-family="Liberation Sans, sans-serif" font-size="12" fill="#666">60 000</text>
<text transform="translate(637.00,1064.10) rotate(-50)" text-anchor="end" font-family="Liberation Sans, sans-serif" font-size="12" fill="#666">01.03</text>
<text transform="translate(674.33,1064.10) rotate(-50)" text-anchor="end" font-family="Liberation Sans, sans-serif" font-size="12" fill="#666">03.03</text>
<text transform="translate(711.67,1064.10) rotate(-50)" text-anchor="end" font-family="Liberation Sans, sans-serif" font-size="12" fill="#666">05.03</text>
<text transform="translate(749.00,1064.10) rotate(-50)" text-anchor="end" font-family="Liberation Sans, sans-serif" font-size="12" fill="#666">07.03</text>
<text transform="translate(786.33,1064.10) rotate(-50)" text-anchor="end" font-family="Liberation Sans, sans-serif" font-size="12" fill="#666">09.03</text>
<text transform="translate(823.67,1064.10) rotate(-50)" text-anchor="end" font-family="Liberation Sans, sans-serif" font-size="12" fill="#666">11.03</text>
<text transform="translate(861.00,1064.10) rotate(-50)" text-anchor="end" font-family="Liberation Sans, sans-serif" font-size="12" fill="#666">13.03</text>
<text transform="translate(898.33,1064.10) rotate(-50)" text-anchor="end" font-family="Liberation Sans, sans-serif" font-size="12" fill="#666">15.03</text>
<text transform="translate(935.67,1064.10) rotate(-50)" text-anchor="end" font-family="Liberation Sans, sans-serif" font-size="12" fill="#666">17.03</text>
<text transform="translate(973.00,1064.10) rotate(-50)" text-anchor="end" font-family="Liberation Sans, sans-serif" font-size="12" fill="#666">19.03</text>
<text transform="translate(1010.33,1064.10) rotate(-50)" text-anchor="end" font-family="Liberation Sans, sans-serif" font-size="12" fill="#666">21.03</text>
<text transform="translate(1047.67,1064.10) rotate(-50)" text-anchor="end" font-family="Liberation Sans, sans-serif" font-size="12" fill="#666">23.03</text>
<text transform="translate(1085.00,1064.10) rotate(-50)" text-anchor="end" font-family="Liberation Sans, sans-serif" font-size="12" fill="#666">25.03</text>
<text transform="translate(1122.33,1064.10) rotate(-50)" text-anchor="end" font-family="Liberation Sans, sans-serif" font-size="12" fill="#666">27.03</text>
<text transform="translate(1159.67,1064.10) rotate(-50)" text-anchor="end" font-family="Liberation Sans, sans-serif" font-size="12" fill="#666">29.03</text>
<text transform="translate(1197.00,1064.10) rotate(-50)" text-anchor="end" font-family="Liberation Sans, sans-serif" font-size="12" fill="#666">31.03</text>
<text transform="translate(577.0,950.4) rotate(-90)" text-anchor="middle" font-family="Liberation Sans, sans-serif" font-size="12" fill="#666">Czas (min)</text>
<text transform="translate(1260.3,950.4) rotate(90)" text-anchor="middle" font-family="Liberation Sans, sans-serif" font-size="12" fill="#666">Zadania</text>
<text transform="translate(1332.5,950.4) rotate(90)" text-anchor="middle" font-family="Liberation Sans, sans-serif" font-size="12" fill="#666">Transfer (MB)</text>
<rect x="786.3" y="1102.8" width="12" height="11" fill="rgba(0,68,148,0.1)" stroke="#004494" stroke-width="3"/>
<text x="803.8" y="1112.2" font-family="Liberation Sans, sans-serif" font-size="11" fill="#666">Czas (min)</text>
<rect x="866.9" y="1102.8" width="12" height="11" fill="rgba(0,0,0,0.1)" stroke="#FFD617" stroke-width="3" stroke-dasharray="5 5"/>
<text x="884.4" y="1112.2" font-family="Liberation Sans, sans-serif" font-size="11" fill="#666">Zadania</text>
<rect x="934.0" y="1102.8" width="12" height="11" fill="none" stroke="#38a169" stroke-width="3"/>
<text x="951.5" y="1112.2" font-family="Liberation Sans, sans-serif" font-size="11" fill="#666">Odebrano (MB)</text>
<rect x="1037.6" y="1102.8" width="12" height="11" fill="none" stroke="#e53e3e" stroke-width="3"/>
<text x="1055.1" y="1112.2" font-family="Liberation Sans, sans-serif" font-size="11" fill="#666">Wysłano (MB)</text></svg>

<div class="abs footer"><span class="a" style="left:625.5px">Regulamin</span><span class="a" style="left:707px">Polityka Prywatności</span><div class="b">ECHSE-NET © 2026</div><div class="c">d6eaaa28 - 20260421</div></div>

</body></html>
